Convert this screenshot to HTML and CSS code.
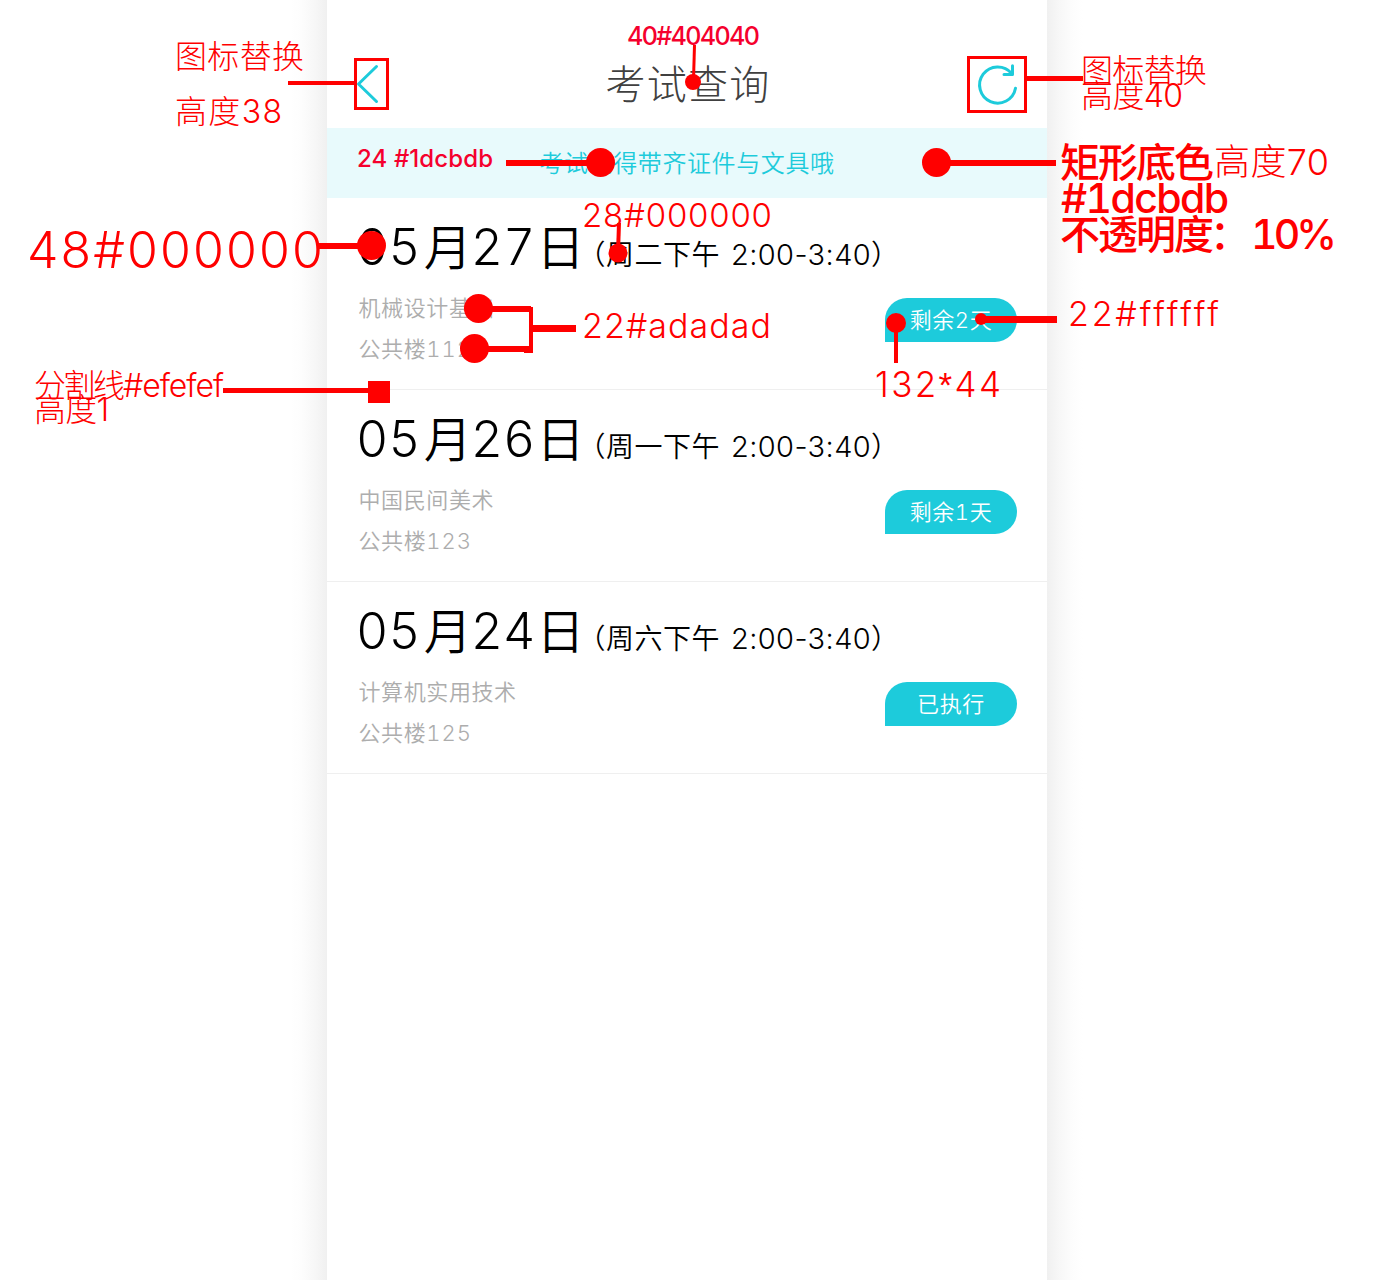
FILE: index.html
```html
<!DOCTYPE html>
<html lang="zh-CN">
<head>
<meta charset="utf-8">
<title>考试查询</title>
<link rel="stylesheet" href="styles.css">
</head>
<body>
<div class="page">
  <div class="gutter gutter-left"></div>
  <main class="phone">
    <header class="bar">
      <svg class="back" viewBox="0 0 22 38" width="22" height="38"><path d="M19.500 1.500 1.500 19l18 17.500"/></svg>
      <h1 class="title">考试查询</h1>
      <svg class="refresh" viewBox="0 0 40 40" width="40" height="40"><path d="M38.500 24.300A18.100 18.100 0 1 1 34.500 9.300M35.500 1.800V10.500H27"/></svg>
    </header>
    <p class="notice">考试记得带齐证件与文具哦</p>
    <section class="exam">
      <h2 class="date"><span class="num">05</span>月<span class="num day">27</span>日<span class="time">（周二下午 <span class="clock">2:00-3:40</span>）</span></h2>
      <div class="detail"><div class="info"><p>机械设计基础</p><p>公共楼<span class="room">112</span></p></div><span class="tag">剩余2天</span></div>
    </section>
    <section class="exam">
      <h2 class="date"><span class="num">05</span>月<span class="num day">26</span>日<span class="time">（周一下午 <span class="clock">2:00-3:40</span>）</span></h2>
      <div class="detail"><div class="info"><p>中国民间美术</p><p>公共楼<span class="room">123</span></p></div><span class="tag">剩余1天</span></div>
    </section>
    <section class="exam">
      <h2 class="date"><span class="num">05</span>月<span class="num day">24</span>日<span class="time">（周六下午 <span class="clock">2:00-3:40</span>）</span></h2>
      <div class="detail"><div class="info"><p>计算机实用技术</p><p>公共楼<span class="room">125</span></p></div><span class="tag">已执行</span></div>
    </section>
  </main>
  <div class="gutter gutter-right"></div>
</div>
<svg class="notes" viewBox="0 0 1374 1280" width="1374" height="1280">
  <g class="lines">
    <path stroke-width="4" d="M288 83H355"/>
    <rect x="355.500" y="59.500" width="32" height="49" stroke-width="3"/>
    <path stroke-width="3" d="M694.500 45 693.500 80"/>
    <rect x="968.500" y="57.500" width="57" height="54" stroke-width="3"/>
    <path stroke-width="5" d="M1027 78.500H1083"/>
    <path stroke-width="6" d="M506 163H600M936 163H1056M318 246H372"/>
    <path stroke-width="4" d="M619 223 618 253"/>
    <path stroke-width="6" d="M478 309H531M474 349H531"/>
    <path stroke-width="4" d="M531 307V353M524 351H533"/>
    <path stroke-width="7" d="M531 328.500H576M981 319.500H1057"/>
    <path stroke-width="4" d="M896 322V363"/>
    <path stroke-width="5" d="M223 390.500H370"/>
  </g>
  <g class="dots">
    <circle cx="693" cy="82" r="8"/>
    <circle cx="600.500" cy="162.500" r="14.500"/>
    <circle cx="936.500" cy="162.500" r="14.500"/>
    <circle cx="371.500" cy="245.500" r="14.500"/>
    <circle cx="618" cy="253" r="9.500"/>
    <circle cx="478.500" cy="308.500" r="14.500"/>
    <circle cx="474.500" cy="348.500" r="14.500"/>
    <circle cx="896" cy="323" r="10"/>
    <circle cx="981" cy="319" r="6"/>
    <rect x="368" y="381" width="22" height="22"/>
  </g>
  <g class="labels">
    <text x="175" y="68" font-size="32" textLength="129">图标替换</text>
    <text x="175" y="123" font-size="32" textLength="107">高度38</text>
    <text class="pink" x="627" y="45" font-size="25" textLength="133">40#404040</text>
    <text x="1081" y="82" font-size="32" textLength="126">图标替换</text>
    <text x="1081" y="107" font-size="32" textLength="102">高度40</text>
    <text class="pink" x="357" y="167" font-size="24" textLength="136">24 #1dcbdb</text>
    <text class="strong" x="1060" y="177" font-size="40" textLength="154">矩形底色</text>
    <text x="1214" y="175" font-size="36" textLength="115">高度70</text>
    <text class="strong latin" x="1061" y="213" font-size="41" textLength="168">#1dcbdb</text>
    <text class="strong" x="1060" y="249" font-size="40" textLength="154">不透明度</text>
    <text class="strong" x="1210" y="249" font-size="40">：</text>
    <text class="strong latin" x="1251" y="249" font-size="41" textLength="86">10%</text>
    <text x="27" y="268" font-size="50" textLength="296">48#000000</text>
    <text x="582" y="227" font-size="33" textLength="190">28#000000</text>
    <text x="582" y="338" font-size="34" textLength="189">22#adadad</text>
    <text x="1068" y="326" font-size="34" textLength="151">22#ffffff</text>
    <text x="875" y="397" font-size="35" textLength="126">132<tspan class="star">*</tspan>44</text>
    <text x="34" y="397" font-size="32" textLength="91">分割线</text>
    <text x="123" y="397" font-size="32" textLength="101">#efefef</text>
    <text x="34" y="421" font-size="32" textLength="75">高度1</text>
  </g>
</svg>
</body>
</html>
```
FILE: styles.css
```css
* { box-sizing: border-box; margin: 0; padding: 0; }

body {
  width: 1374px;
  height: 1280px;
  overflow: hidden;
  background: #fff;
  font-family: "Inter", "Noto Sans CJK SC", sans-serif;
  font-weight: 300;
}

.page { position: relative; display: grid; grid-template-columns: 327px 720px 327px; height: 1280px; }
.gutter-left { background: linear-gradient(to left, #f0f0f0, #f7f7f7 12px, #fdfdfd 26px, #fff 36px); }
.gutter-right { background: linear-gradient(to right, #f0f0f0, #f7f7f7 12px, #fdfdfd 26px, #fff 36px); }

.bar { display: flex; justify-content: space-between; align-items: center; height: 128px; padding: 40px 30px 0; }
.title { font-size: 40px; line-height: 60px; font-weight: 300; color: #404040; letter-spacing: 1.2px; padding: 2px 0 0 20px; }
.back, .refresh { overflow: visible; fill: none; stroke: #1dcbdb; stroke-width: 3; stroke-linecap: round; stroke-linejoin: round; }

.notice { height: 70px; line-height: 71px; background: #e8fafc; color: #1dcbdb; font-size: 24px; font-weight: 350; letter-spacing: .6px; text-align: center; }

.exam { height: 192px; padding: 19px 30px 0; border-bottom: 1px solid #efefef; color: #000; }
.date { height: 60px; line-height: 60px; font-size: 48px; font-weight: 350; letter-spacing: 1px; white-space: nowrap; font-variant-numeric: tabular-nums; }
.num { font-size: 50px; font-weight: 300; letter-spacing: 0; margin: 0 3px 0 -1px; }
.day { margin: 0 1px 0 -2px; }
.time { font-size: 28px; letter-spacing: .5px; margin-left: -8px; }
.clock { font-size: 29px; font-weight: 300; letter-spacing: .4px; margin-left: 3px; font-variant-numeric: normal; }
.detail { display: flex; justify-content: space-between; padding-top: 11px; }
.info { padding: 0 1.5px; color: #adadad; font-size: 22px; font-weight: 350; line-height: 41px; letter-spacing: .6px; }
.room { letter-spacing: 1px; font-variant-numeric: tabular-nums; }
.tag { width: 132px; height: 44px; margin-top: 10px; border-radius: 22px 22px 22px 0; background: #1dcbdb; color: #fff; font-size: 22px; font-weight: 350; line-height: 44px; letter-spacing: .6px; text-align: center; font-variant-numeric: tabular-nums; }

.notes { position: absolute; left: 0; top: 0; }
.lines { fill: none; stroke: #f00; }
.dots, .labels { fill: #f00; }
.strong { font-weight: 500; }
.latin { font-weight: 450; font-variant-numeric: tabular-nums; }
.star { font-family: "Liberation Sans", sans-serif; }
.pink { fill: #f5002d; font-weight: 450; }
```
